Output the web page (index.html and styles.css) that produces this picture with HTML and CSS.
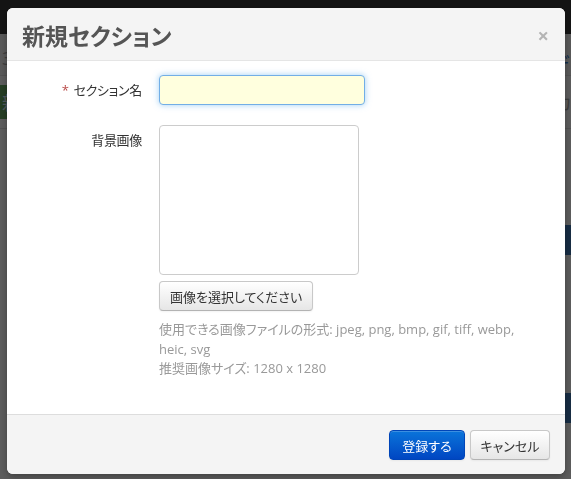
FILE: index.html
```html
<!DOCTYPE html>
<html lang="ja">
<head>
  <meta charset="UTF-8">
  <meta name="viewport" content="width=device-width, initial-scale=1.0">
  <title>新規セクション</title>
  <link rel="stylesheet" href="styles.css">
</head>
<body>

  <!-- page behind the dialog -->
  <div class="page">
    <div class="navbar"></div>
    <div class="toolbar">
      <span class="crumb">3</span>
      <span class="link">デ</span>
    </div>
    <div class="row-line">
      <span class="tag">新</span>
      <span class="muted">カ</span>
    </div>
    <div class="list">
      <div class="band"></div>
      <div class="band"></div>
    </div>
  </div>
  <div class="backdrop"></div>

  <div class="modal">
    <div class="modal-header">
      <h3>新規セクション</h3>
      <span class="close">×</span>
    </div>

    <div class="modal-body">
      <form class="form">
        <label class="control-label"><span class="required">*</span>セクション名</label>
        <div class="controls">
          <input type="text" class="name-input">
        </div>

        <label class="control-label">背景画像</label>
        <div class="controls">
          <div class="image-box"></div>
          <button type="button" class="btn btn-file">画像を選択してください</button>
          <p class="help">使用できる画像ファイルの形式: jpeg, png, bmp, gif, tiff, webp, heic, svg<br>推奨画像サイズ: 1280 x 1280</p>
        </div>
      </form>
    </div>

    <div class="modal-footer">
      <button type="button" class="btn btn-primary">登録する</button>
      <button type="button" class="btn btn-cancel">キャンセル</button>
    </div>
  </div>

</body>
</html>
```

FILE: styles.css
```css
body {
  margin: 0;
  font-family: "Open Sans", "Noto Sans CJK JP", sans-serif;
  font-feature-settings: "palt";
  font-size: 13px;
  color: #333;
  background-color: #e6e6e6;
  height: 479px;
  overflow: hidden;
}

/* page under the overlay */
.page {
  height: 100%;
  overflow: hidden;
}

.navbar {
  height: 34px;
  background-color: #333;
}

.toolbar {
  display: flex;
  justify-content: space-between;
  height: 42px;
  border-bottom: 1px solid #ccc;
  background-color: #ddd;
  padding: 12px 2px 0 2px;
  font-size: 18px;
  color: #999;
  box-sizing: border-box;
}

.toolbar .link {
  color: #2a6ab8;
  padding-top: 4px;
}

.row-line {
  display: flex;
  justify-content: space-between;
  align-items: center;
  height: 52px;
  border-bottom: 1px solid #ccc;
  font-size: 18px;
  color: #999;
}

.tag {
  background-color: #5f9a5a;
  color: #cde;
  padding: 4px 2px;
}

.list {
  padding-top: 96px;
  height: 350px;
  box-sizing: border-box;
}

.band {
  height: 30px;
  margin-left: 540px;
  background-color: #3a6fa8;
  margin-bottom: 138px;
}

.backdrop {
  position: fixed;
  inset: 0;
  background-color: rgba(0, 0, 0, 0.6);
}

/* dialog */
.modal {
  position: fixed;
  left: 7px;
  top: 8px;
  width: 558px;
  height: 466px;
  display: flex;
  flex-direction: column;
  background-color: #fff;
  border-radius: 6px;
  box-shadow: 0 3px 7px rgba(0, 0, 0, 0.3);
  overflow: hidden;
}

.modal-header {
  display: flex;
  align-items: center;
  justify-content: space-between;
  height: 53px;
  padding: 2px 15px 0 15px;
  box-sizing: border-box;
  background-color: #f4f4f4;
  border-bottom: 1px solid #e5e5e5;
}

.modal-header h3 {
  margin: 0;
  font-size: 23px;
  font-weight: bold;
  color: #555;
}

.close {
  font-size: 20px;
  font-weight: bold;
  color: #b4b4b4;
  margin-right: 1px;
}

.modal-body {
  flex: 1;
  padding: 14px 15px 0 15px;
}

.form {
  display: grid;
  grid-template-columns: 120px 1fr;
  column-gap: 17px;
  row-gap: 20px;
}

.control-label {
  text-align: right;
  padding-top: 5px;
  line-height: 20px;
  letter-spacing: -0.3px;
}

.required {
  color: #b94a48;
  margin-right: 5px;
}

.name-input {
  display: block;
  width: 206px;
  height: 30px;
  box-sizing: border-box;
  margin: 0;
  background-color: #ffffde;
  border: 1px solid #72aee6;
  border-radius: 4px;
  box-shadow: 0 0 6px rgba(82, 168, 236, 0.55);
  outline: none;
}

.image-box {
  width: 200px;
  height: 150px;
  box-sizing: border-box;
  border: 1px solid #ccc;
  border-radius: 4px;
}

.btn {
  display: inline-block;
  height: 30px;
  padding: 0 12px;
  font-family: inherit;
  font-feature-settings: "palt";
  font-size: 13px;
  color: #333;
  background-image: linear-gradient(#ffffff, #e6e6e6);
  border: 1px solid #c8c8c8;
  border-bottom-color: #b3b3b3;
  border-radius: 4px;
  box-shadow: inset 0 1px 0 rgba(255, 255, 255, 0.2), 0 1px 2px rgba(0, 0, 0, 0.05);
  cursor: pointer;
}

.btn-file {
  margin-top: 6px;
  padding: 0 10px;
}

.btn-primary {
  width: 76px;
  padding: 0;
  color: #fff;
  background-image: linear-gradient(#0a74da, #0046c2);
  border-color: #0045b8;
}

.btn-cancel {
  width: 80px;
  padding: 0;
}

.help {
  margin: 9px 0 0 0;
  max-width: 375px;
  line-height: 19.5px;
  color: #999;
}

.modal-footer {
  display: flex;
  justify-content: flex-end;
  gap: 5px;
  height: 60px;
  box-sizing: border-box;
  padding: 15px 15px 0 0;
  background-color: #f4f4f4;
  border-top: 1px solid #ddd;
}
```
